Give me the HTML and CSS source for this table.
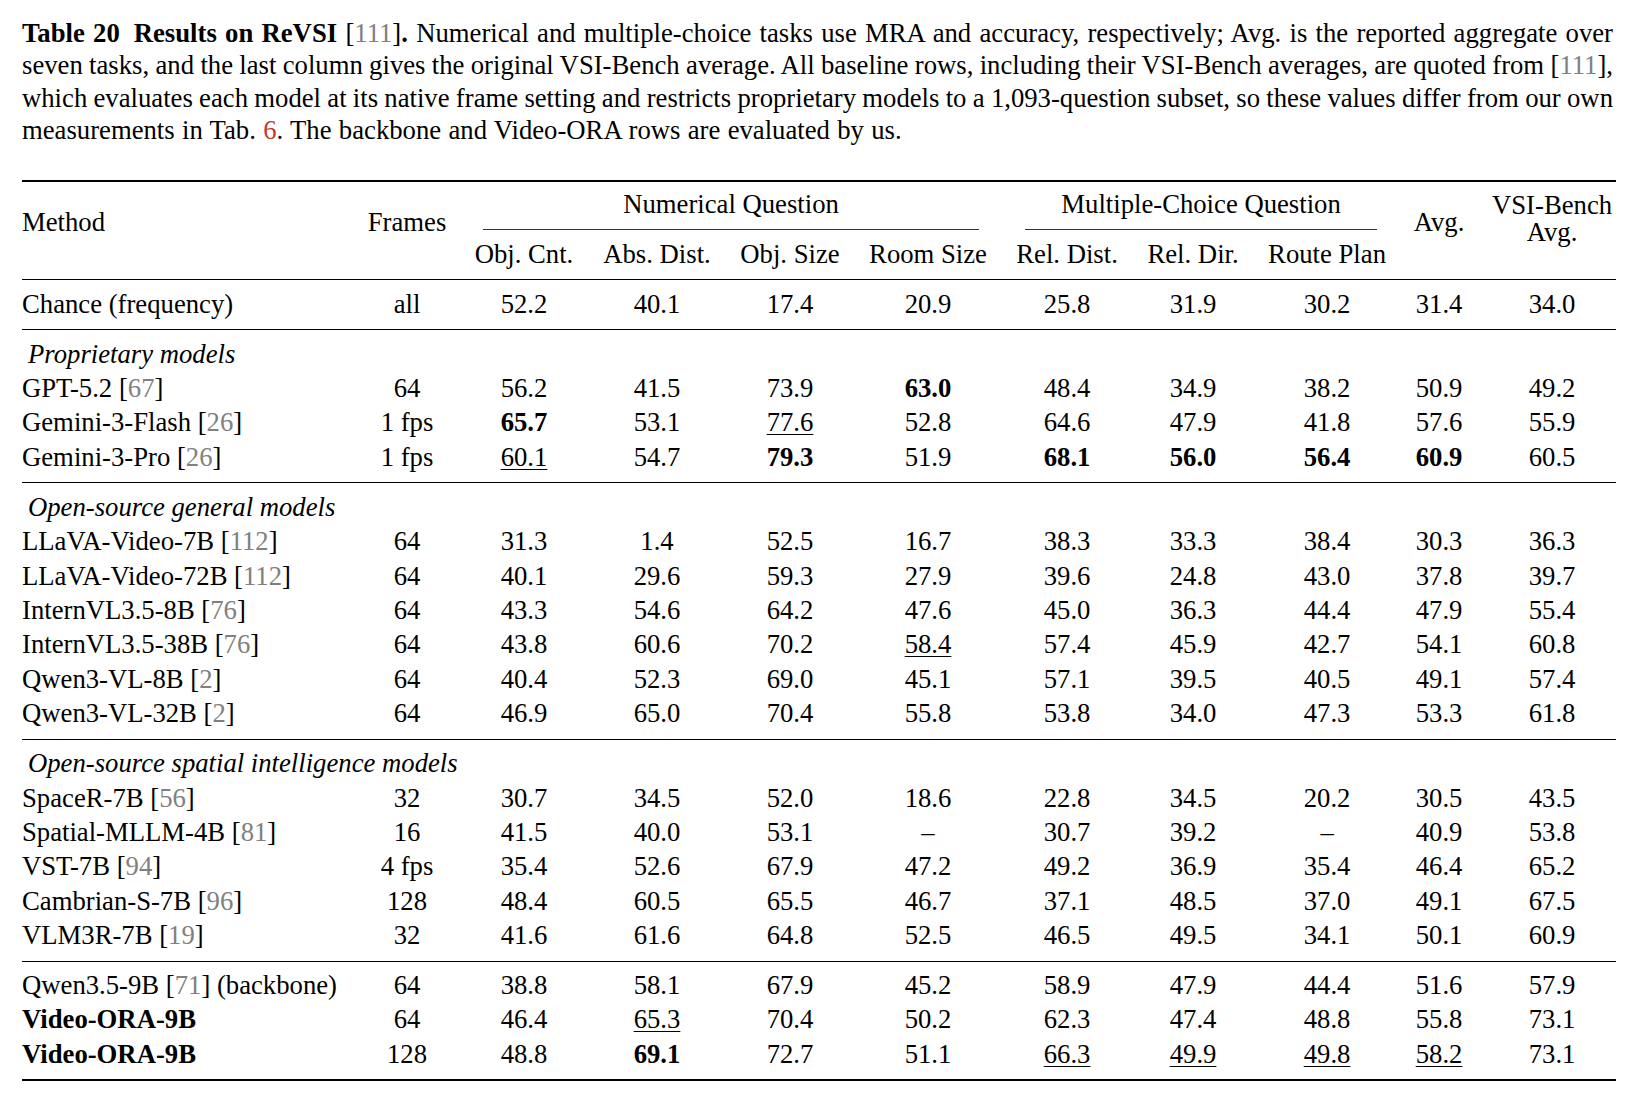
FILE: index.html
```html
<!DOCTYPE html>
<html>
    <head>
        <meta charset="utf-8">
        <link rel="stylesheet" href="styles.css">
    </head>
    <body>
        <div class="page">
            <p class="caption">
                <span class="line"><b class="tab-no">Table 20</b><b>Results on ReVSI</b> [<span class="ref">111</span>]<b>.</b> Numerical and multiple-choice tasks use MRA and accuracy, respectively; Avg. is the reported aggregate over</span>
                <span class="line">seven tasks, and the last column gives the original VSI-Bench average. All baseline rows, including their VSI-Bench averages, are quoted from [<span class="ref">111</span>],</span>
                <span class="line">which evaluates each model at its native frame setting and restricts proprietary models to a 1,093-question subset, so these values differ from our own</span>
                <span class="line last">measurements in Tab. <span class="link">6</span>. The backbone and Video-ORA rows are evaluated by us.</span>
            </p>

            <table class="results">
                <colgroup>
                    <col class="w-method">
                    <col class="w-frames">
                    <col class="w-cnt">
                    <col class="w-abs">
                    <col class="w-size">
                    <col class="w-room">
                    <col class="w-rdist">
                    <col class="w-rdir">
                    <col class="w-route">
                    <col class="w-avg">
                    <col class="w-vsi">
                </colgroup>
                <thead>
                    <tr>
                        <th rowspan="2" class="span-head name">Method</th>
                        <th rowspan="2" class="span-head">Frames</th>
                        <th colspan="4" class="group-head"><div class="cmid num">Numerical Question</div></th>
                        <th colspan="3" class="group-head"><div class="cmid mc">Multiple-Choice Question</div></th>
                        <th rowspan="2" class="span-head">Avg.</th>
                        <th rowspan="2" class="span-head two-line">VSI-Bench<br>Avg.</th>
                    </tr>
                    <tr class="sub-head">
                        <th>Obj. Cnt.</th>
                        <th>Abs. Dist.</th>
                        <th>Obj. Size</th>
                        <th>Room Size</th>
                        <th>Rel. Dist.</th>
                        <th>Rel. Dir.</th>
                        <th>Route Plan</th>
                    </tr>
                </thead>

                <tbody>
                    <tr><td class="name">Chance (frequency)</td><td>all</td><td>52.2</td><td>40.1</td><td>17.4</td><td>20.9</td><td>25.8</td><td>31.9</td><td>30.2</td><td>31.4</td><td>34.0</td></tr>
                </tbody>

                <tbody>
                    <tr><td colspan="11" class="group-label">Proprietary models</td></tr>
                    <tr><td class="name">GPT-5.2 [<span class="ref">67</span>]</td><td>64</td><td>56.2</td><td>41.5</td><td>73.9</td><td class="b">63.0</td><td>48.4</td><td>34.9</td><td>38.2</td><td>50.9</td><td>49.2</td></tr>
                    <tr><td class="name">Gemini-3-Flash [<span class="ref">26</span>]</td><td>1 fps</td><td class="b">65.7</td><td>53.1</td><td><span class="u">77.6</span></td><td>52.8</td><td>64.6</td><td>47.9</td><td>41.8</td><td>57.6</td><td>55.9</td></tr>
                    <tr><td class="name">Gemini-3-Pro [<span class="ref">26</span>]</td><td>1 fps</td><td><span class="u">60.1</span></td><td>54.7</td><td class="b">79.3</td><td>51.9</td><td class="b">68.1</td><td class="b">56.0</td><td class="b">56.4</td><td class="b">60.9</td><td>60.5</td></tr>
                </tbody>

                <tbody>
                    <tr><td colspan="11" class="group-label">Open-source general models</td></tr>
                    <tr><td class="name">LLaVA-Video-7B [<span class="ref">112</span>]</td><td>64</td><td>31.3</td><td>1.4</td><td>52.5</td><td>16.7</td><td>38.3</td><td>33.3</td><td>38.4</td><td>30.3</td><td>36.3</td></tr>
                    <tr><td class="name">LLaVA-Video-72B [<span class="ref">112</span>]</td><td>64</td><td>40.1</td><td>29.6</td><td>59.3</td><td>27.9</td><td>39.6</td><td>24.8</td><td>43.0</td><td>37.8</td><td>39.7</td></tr>
                    <tr><td class="name">InternVL3.5-8B [<span class="ref">76</span>]</td><td>64</td><td>43.3</td><td>54.6</td><td>64.2</td><td>47.6</td><td>45.0</td><td>36.3</td><td>44.4</td><td>47.9</td><td>55.4</td></tr>
                    <tr><td class="name">InternVL3.5-38B [<span class="ref">76</span>]</td><td>64</td><td>43.8</td><td>60.6</td><td>70.2</td><td><span class="u">58.4</span></td><td>57.4</td><td>45.9</td><td>42.7</td><td>54.1</td><td>60.8</td></tr>
                    <tr><td class="name">Qwen3-VL-8B [<span class="ref">2</span>]</td><td>64</td><td>40.4</td><td>52.3</td><td>69.0</td><td>45.1</td><td>57.1</td><td>39.5</td><td>40.5</td><td>49.1</td><td>57.4</td></tr>
                    <tr><td class="name">Qwen3-VL-32B [<span class="ref">2</span>]</td><td>64</td><td>46.9</td><td>65.0</td><td>70.4</td><td>55.8</td><td>53.8</td><td>34.0</td><td>47.3</td><td>53.3</td><td>61.8</td></tr>
                </tbody>

                <tbody>
                    <tr><td colspan="11" class="group-label">Open-source spatial intelligence models</td></tr>
                    <tr><td class="name">SpaceR-7B [<span class="ref">56</span>]</td><td>32</td><td>30.7</td><td>34.5</td><td>52.0</td><td>18.6</td><td>22.8</td><td>34.5</td><td>20.2</td><td>30.5</td><td>43.5</td></tr>
                    <tr><td class="name">Spatial-MLLM-4B [<span class="ref">81</span>]</td><td>16</td><td>41.5</td><td>40.0</td><td>53.1</td><td>–</td><td>30.7</td><td>39.2</td><td>–</td><td>40.9</td><td>53.8</td></tr>
                    <tr><td class="name">VST-7B [<span class="ref">94</span>]</td><td>4 fps</td><td>35.4</td><td>52.6</td><td>67.9</td><td>47.2</td><td>49.2</td><td>36.9</td><td>35.4</td><td>46.4</td><td>65.2</td></tr>
                    <tr><td class="name">Cambrian-S-7B [<span class="ref">96</span>]</td><td>128</td><td>48.4</td><td>60.5</td><td>65.5</td><td>46.7</td><td>37.1</td><td>48.5</td><td>37.0</td><td>49.1</td><td>67.5</td></tr>
                    <tr><td class="name">VLM3R-7B [<span class="ref">19</span>]</td><td>32</td><td>41.6</td><td>61.6</td><td>64.8</td><td>52.5</td><td>46.5</td><td>49.5</td><td>34.1</td><td>50.1</td><td>60.9</td></tr>
                </tbody>

                <tbody>
                    <tr><td class="name">Qwen3.5-9B [<span class="ref">71</span>] (backbone)</td><td>64</td><td>38.8</td><td>58.1</td><td>67.9</td><td>45.2</td><td>58.9</td><td>47.9</td><td>44.4</td><td>51.6</td><td>57.9</td></tr>
                    <tr><td class="name b">Video-ORA-9B</td><td>64</td><td>46.4</td><td><span class="u">65.3</span></td><td>70.4</td><td>50.2</td><td>62.3</td><td>47.4</td><td>48.8</td><td>55.8</td><td>73.1</td></tr>
                    <tr><td class="name b">Video-ORA-9B</td><td>128</td><td>48.8</td><td class="b">69.1</td><td>72.7</td><td>51.1</td><td><span class="u">66.3</span></td><td><span class="u">49.9</span></td><td><span class="u">49.8</span></td><td><span class="u">58.2</span></td><td>73.1</td></tr>
                </tbody>
            </table>
        </div>
    </body>
</html>
```
FILE: styles.css
```css
/* table page, tex look */
body{
    margin: 0;
    background: #fff;
    color: #000;
    font-family: "Liberation Serif", "Times New Roman", serif;
    font-size: 26.7px;
}
.page{
    width: 1594px;
    padding: 16.7px 0 0 22px;
}

/* caption */
.caption{
    width: 1591px;
    margin: 0 0 33.6px 0;
    line-height: 32.4px;
}
.line{
    display: block;
    text-align: justify;
    text-align-last: justify;
    white-space: nowrap;
    word-spacing: -2px;
}
.line.last{
    text-align-last: left;
    word-spacing: 0.65px;
}
.tab-no{
    margin-right: 14px;
}
.ref{
    color: #808080;
}
.link{
    color: #c0392b;
}

/* table */
.results{
    border-collapse: separate;
    border-spacing: 0;
    table-layout: fixed;
    width: 1594px;
    border-top: 2px solid #000;
    border-bottom: 2px solid #000;
    line-height: 34.4px;
}
.w-method{ width: 322px; }
.w-frames{ width: 126px; }
.w-cnt{ width: 108px; }
.w-abs{ width: 158px; }
.w-size{ width: 108px; }
.w-room{ width: 168px; }
.w-rdist{ width: 110px; }
.w-rdir{ width: 142px; }
.w-route{ width: 126px; }
.w-avg{ width: 98px; }
.w-vsi{ width: 128px; }

th, td{
    padding: 0;
    font-weight: normal;
    text-align: center;
    white-space: nowrap;
}
th.name, td.name{
    text-align: left;
}
td.name.b{
    font-weight: bold;
}

.span-head{
    vertical-align: top;
    padding-top: 22.8px;
}
.span-head.two-line{
    line-height: 27px;
    padding-top: 10.5px;
}
.group-head{
    vertical-align: top;
    padding-top: 5px;
}
.cmid{
    padding-bottom: 8px;
    border-bottom: 1px solid #333;
}
.cmid.num{
    margin: 0 33px 0 13px;
}
.cmid.mc{
    margin: 0 13px 0 13px;
}
.sub-head th{
    padding: 6.5px 0 8px 0;
}

tbody tr:first-child td{
    border-top: 1px solid #000;
    padding-top: 6.5px;
}
tbody tr:last-child td{
    padding-bottom: 8px;
}
.group-label{
    font-style: italic;
    text-align: left;
    padding-left: 6px;
}

.b{
    font-weight: bold;
}
.u{
    text-decoration: underline;
    text-decoration-thickness: 1px;
    text-underline-offset: 3px;
}
```
